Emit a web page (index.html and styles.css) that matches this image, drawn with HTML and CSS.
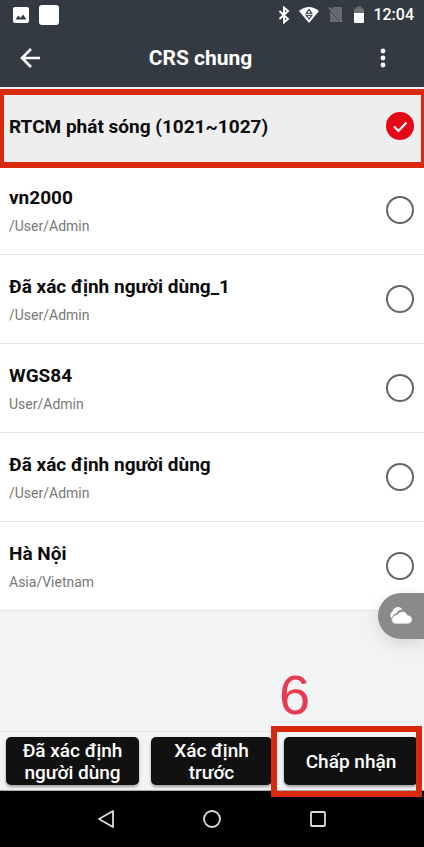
FILE: index.html
```html
<!DOCTYPE html>
<html lang="vi">
<head>
<meta charset="utf-8">
<meta name="viewport" content="width=device-width, initial-scale=1">
<title>CRS chung</title>
<link rel="stylesheet" href="styles.css">
</head>
<body>
<header class="top">
  <div class="status">
    <svg class="ic-photo" width="16" height="16" viewBox="0 0 16 16"><rect width="16" height="16" rx="2" fill="#fff"/><path d="M2.500 12.500 5.500 8.500 7.500 11 10 7.500 13.500 12.500z" fill="#343a42"/></svg>
    <span class="app-square"></span>
    <span class="spacer"></span>
    <svg class="ic-bt" width="12" height="18" viewBox="0 0 12 18" fill="none" stroke="#fff" stroke-width="1.900"><path d="M1.500 5 10 13 6 16.500V1.500L10 5 1.500 13"/></svg>
    <svg class="ic-wifi" width="22" height="18" viewBox="0 0 22 18"><path d="M1 5Q11-3 21 5L11 17z" fill="#fff"/><path d="M11 3.500 13.800 7.300H8.200zM11 13 8.200 9.200H13.800z" fill="#fff" stroke="#343a42" stroke-width="1.100"/></svg>
    <svg class="ic-sim" width="15" height="17" viewBox="0 0 15 17"><path d="M5.500 1H13a1 1 0 0 1 1 1V14.500L3.500 3zM2 5 12.500 16H3a1 1 0 0 1-1-1z" fill="#666b71"/><path d="M1 1.500 14 16" stroke="#7b8086" stroke-width="1.300"/></svg>
    <svg class="ic-battery" width="10" height="18" viewBox="0 0 10 18"><path d="M0 7V3.500a1 1 0 0 1 1-1H2.500V.5H7.500V2.500H9a1 1 0 0 1 1 1V7z" fill="#6b7076"/><path d="M0 7H10V16a1 1 0 0 1-1 1H1a1 1 0 0 1-1-1z" fill="#fff"/></svg>
    <time class="clock">12:04</time>
  </div>
  <div class="bar">
    <button class="icon-btn" type="button" aria-label="Quay lại"><svg width="20" height="20" viewBox="0 0 20 20" fill="none" stroke="#fff" stroke-width="2.600"><path d="M20 10H2M11 1 2 10 11 19"/></svg></button>
    <h1 class="title">CRS chung</h1>
    <button class="icon-btn" type="button" aria-label="Menu"><svg width="20" height="20" viewBox="0 0 20 20" fill="#fff"><circle cx="10" cy="3" r="2.400"/><circle cx="10" cy="10" r="2.400"/><circle cx="10" cy="17" r="2.400"/></svg></button>
  </div>
</header>

<main class="content">
  <ul class="list">
    <li class="item selected"><label class="row"><span class="text"><span class="name">RTCM phát sóng (1021~1027)</span></span><input class="radio" type="radio" name="crs" checked><svg class="check" width="28" height="28" viewBox="0 0 28 28" fill="none" stroke="#fff" stroke-width="2.200"><path d="M8 14.500 12.500 19 20.500 10.500"/></svg></label></li>
    <li class="item"><label class="row"><span class="text"><span class="name">vn2000</span><span class="path">/User/Admin</span></span><input class="radio" type="radio" name="crs"></label></li>
    <li class="item"><label class="row"><span class="text"><span class="name">Đã xác định người dùng_1</span><span class="path">/User/Admin</span></span><input class="radio" type="radio" name="crs"></label></li>
    <li class="item"><label class="row"><span class="text"><span class="name">WGS84</span><span class="path">User/Admin</span></span><input class="radio" type="radio" name="crs"></label></li>
    <li class="item"><label class="row"><span class="text"><span class="name">Đã xác định người dùng</span><span class="path">/User/Admin</span></span><input class="radio" type="radio" name="crs"></label></li>
    <li class="item"><label class="row"><span class="text"><span class="name">Hà Nội</span><span class="path">Asia/Vietnam</span></span><input class="radio" type="radio" name="crs"></label></li>
  </ul>
  <button class="cloud" type="button" aria-label="Đám mây"><svg width="24" height="18" viewBox="0 0 24 18"><path d="M3 11.500A4.200 4.200 0 0 1 3.500 4.500 5.500 5.500 0 0 1 13.500 2.500Q9 2.500 7.800 6 3.500 7 3 11.500z" fill="#fff"/><path d="M6.500 17A4.400 4.400 0 0 1 5.500 8.500Q6.500 7.500 8.500 7.200A5.500 5.500 0 0 1 18.500 8 4.500 4.500 0 0 1 19 17z" fill="#fff" stroke="#8a8a8b" stroke-width=".8"/></svg></button>
</main>

<footer class="actions">
  <button class="btn" type="button">Đã xác định người dùng</button>
  <button class="btn" type="button">Xác định trước</button>
  <div class="marked">
    <button class="btn" type="button">Chấp nhận</button>
    <span class="step">6</span>
  </div>
</footer>

<nav class="sysnav">
  <button class="icon-btn" type="button" aria-label="Back"><svg width="20" height="20" viewBox="0 0 20 20" fill="none" stroke="#ddd" stroke-width="1.800" stroke-linejoin="round"><path d="M17 2V18L3 10z"/></svg></button>
  <button class="icon-btn" type="button" aria-label="Home"><svg width="20" height="20" viewBox="0 0 20 20" fill="none" stroke="#ddd" stroke-width="1.800"><circle cx="10" cy="10" r="8"/></svg></button>
  <button class="icon-btn" type="button" aria-label="Recent"><svg width="20" height="20" viewBox="0 0 20 20" fill="none" stroke="#ddd" stroke-width="1.800"><rect x="3" y="3" width="14" height="14" rx="1"/></svg></button>
</nav>
</body>
</html>
```
FILE: styles.css
```css
* { box-sizing: border-box; }

body {
  margin: 0;
  min-height: 100vh;
  display: flex;
  flex-direction: column;
  overflow-x: hidden;
  font-family: Roboto, "Liberation Sans", sans-serif;
  background: #f2f3f5;
  color: #0c0c0c;
}

button {
  border: 0;
  padding: 0;
  font: inherit;
  color: inherit;
  background: none;
}

svg { display: block; }

.top {
  background: #343a42;
  color: #fff;
}

.status {
  display: flex;
  align-items: center;
  height: 29px;
  padding: 0 10px 0 13px;
}

.app-square {
  width: 20px;
  height: 20px;
  margin-left: 10px;
  border-radius: 3px;
  background: #fff;
}

.spacer { flex: 1; }
.ic-wifi { margin-left: 8px; }
.ic-sim { margin-left: 8px; }
.ic-battery { margin-left: 11px; }

.clock {
  margin-left: 9px;
  font-size: 16px;
  font-weight: 500;
}

.bar {
  display: flex;
  align-items: center;
  height: 58px;
  padding: 0 31px 0 20px;
}

.title {
  flex: 1;
  margin: 0;
  padding-right: 12px;
  font-size: 21px;
  font-weight: 700;
  line-height: 24px;
  text-align: center;
}

.content {
  position: relative;
  flex: 1;
}

.list {
  margin: 0;
  padding: 0;
  list-style: none;
}

.item {
  height: 89px;
  border-bottom: 1px solid #e4e5e6;
  background: #fff;
}

.selected {
  position: relative;
  height: 79px;
  background: #eee;
}

/* Highlight frame around the chosen system */
.selected::after {
  content: "";
  position: absolute;
  inset: 2px 0 -3px;
  border: solid #d9290d;
  border-width: 6px 3px 6px 4px;
  pointer-events: none;
}

.row {
  display: flex;
  align-items: center;
  justify-content: space-between;
  height: 100%;
  padding: 0 10px 0 9px;
}

.text {
  display: flex;
  flex-direction: column;
  gap: 6px;
  padding-top: 2px;
}

.name {
  font-size: 19px;
  font-weight: 700;
  line-height: 24px;
}

.path {
  font-size: 14px;
  line-height: 20px;
  color: #777;
}

.radio {
  appearance: none;
  width: 28px;
  height: 28px;
  margin: 0;
  border: 2px solid #666;
  border-radius: 50%;
}

.radio:checked {
  border-color: #e60617;
  background: #e60617;
}

.selected .text { flex: 1; }

.check {
  position: relative;
  margin-left: -28px;
}

.cloud {
  position: absolute;
  top: 506px;
  right: 0;
  width: 46px;
  height: 46px;
  padding-left: 11px;
  border-radius: 23px 0 0 23px;
  background: #8a8a8b;
  box-shadow: 0 5px 16px rgb(0 0 0 / 12%);
}

.actions {
  display: grid;
  grid-template-columns: 133fr 121fr 134fr;
  gap: 12px;
  padding: 5px 6px;
  border-top: 1px solid #e6e7ea;
  border-bottom: 1px solid #aaa;
}

.btn {
  width: 100%;
  height: 48px;
  padding: 2px 12px 0;
  border-radius: 5px;
  background: #111;
  color: #fff;
  font-size: 19px;
  font-weight: 500;
  line-height: 22px;
  box-shadow: 0 2px 3px rgb(0 0 0 / 35%);
}

.marked { position: relative; }

.marked::after {
  content: "";
  position: absolute;
  inset: -11px -4px -12px -13px;
  border: 6px solid #d9290d;
  pointer-events: none;
}

/* Step number beside the frame */
.step {
  position: absolute;
  left: -5px;
  bottom: 62px;
  font-family: "Liberation Sans", Arial, sans-serif;
  font-size: 56px;
  line-height: 56px;
  color: #e83a50;
}

.sysnav {
  display: flex;
  align-items: center;
  justify-content: center;
  gap: 86px;
  height: 56px;
  background: #000;
}
```
